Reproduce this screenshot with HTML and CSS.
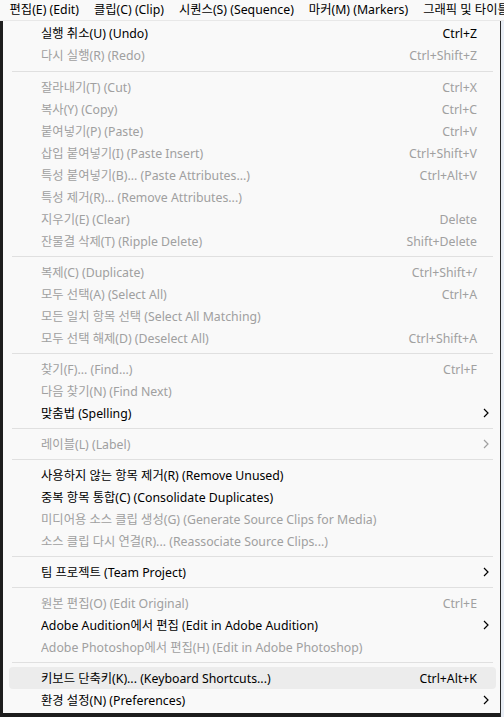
FILE: index.html
```html
<!DOCTYPE html>
<html lang="ko">
<head>
<meta charset="utf-8">
<link rel="stylesheet" href="styles.css">
</head>
<body>
<div class="menubar">
  <span class="mb-item">편집(E) (Edit)</span>
  <span class="mb-item">클립(C) (Clip)</span>
  <span class="mb-item">시퀀스(S) (Sequence)</span>
  <span class="mb-item">마커(M) (Markers)</span>
  <span class="mb-item">그래픽 및 타이틀(G)</span>
</div>
<div class="stage">
  <div class="edge-left"></div>
  <div class="menu">
    <div class="row"><span class="label">실행 취소(U) (Undo)</span><span class="key">Ctrl+Z</span><span class="arrow"></span></div>
    <div class="row off"><span class="label">다시 실행(R) (Redo)</span><span class="key">Ctrl+Shift+Z</span><span class="arrow"></span></div>
    <div class="sep first"></div>
    <div class="row off"><span class="label">잘라내기(T) (Cut)</span><span class="key">Ctrl+X</span><span class="arrow"></span></div>
    <div class="row off"><span class="label">복사(Y) (Copy)</span><span class="key">Ctrl+C</span><span class="arrow"></span></div>
    <div class="row off"><span class="label">붙여넣기(P) (Paste)</span><span class="key">Ctrl+V</span><span class="arrow"></span></div>
    <div class="row off"><span class="label">삽입 붙여넣기(I) (Paste Insert)</span><span class="key">Ctrl+Shift+V</span><span class="arrow"></span></div>
    <div class="row off"><span class="label">특성 붙여넣기(B)... (Paste Attributes...)</span><span class="key">Ctrl+Alt+V</span><span class="arrow"></span></div>
    <div class="row off"><span class="label">특성 제거(R)... (Remove Attributes...)</span><span class="key"></span><span class="arrow"></span></div>
    <div class="row off"><span class="label">지우기(E) (Clear)</span><span class="key">Delete</span><span class="arrow"></span></div>
    <div class="row off"><span class="label">잔물결 삭제(T) (Ripple Delete)</span><span class="key">Shift+Delete</span><span class="arrow"></span></div>
    <div class="sep"></div>
    <div class="row off"><span class="label">복제(C) (Duplicate)</span><span class="key">Ctrl+Shift+/</span><span class="arrow"></span></div>
    <div class="row off"><span class="label">모두 선택(A) (Select All)</span><span class="key">Ctrl+A</span><span class="arrow"></span></div>
    <div class="row off"><span class="label">모든 일치 항목 선택 (Select All Matching)</span><span class="key"></span><span class="arrow"></span></div>
    <div class="row off"><span class="label">모두 선택 해제(D) (Deselect All)</span><span class="key">Ctrl+Shift+A</span><span class="arrow"></span></div>
    <div class="sep"></div>
    <div class="row off"><span class="label">찾기(F)... (Find...)</span><span class="key">Ctrl+F</span><span class="arrow"></span></div>
    <div class="row off"><span class="label">다음 찾기(N) (Find Next)</span><span class="key"></span><span class="arrow"></span></div>
    <div class="row"><span class="label">맞춤법 (Spelling)</span><span class="key"></span><span class="arrow"><svg viewBox="0 0 6 10" width="6" height="10"><path d="M1 1 L5 5 L1 9" fill="none" stroke="currentColor" stroke-width="1.2"/></svg></span></div>
    <div class="sep"></div>
    <div class="row off"><span class="label">레이블(L) (Label)</span><span class="key"></span><span class="arrow"><svg viewBox="0 0 6 10" width="6" height="10"><path d="M1 1 L5 5 L1 9" fill="none" stroke="currentColor" stroke-width="1.2"/></svg></span></div>
    <div class="sep"></div>
    <div class="row"><span class="label">사용하지 않는 항목 제거(R) (Remove Unused)</span><span class="key"></span><span class="arrow"></span></div>
    <div class="row"><span class="label">중복 항목 통합(C) (Consolidate Duplicates)</span><span class="key"></span><span class="arrow"></span></div>
    <div class="row off"><span class="label">미디어용 소스 클립 생성(G) (Generate Source Clips for Media)</span><span class="key"></span><span class="arrow"></span></div>
    <div class="row off"><span class="label">소스 클립 다시 연결(R)... (Reassociate Source Clips...)</span><span class="key"></span><span class="arrow"></span></div>
    <div class="sep"></div>
    <div class="row"><span class="label">팀 프로젝트 (Team Project)</span><span class="key"></span><span class="arrow"><svg viewBox="0 0 6 10" width="6" height="10"><path d="M1 1 L5 5 L1 9" fill="none" stroke="currentColor" stroke-width="1.2"/></svg></span></div>
    <div class="sep"></div>
    <div class="row off"><span class="label">원본 편집(O) (Edit Original)</span><span class="key">Ctrl+E</span><span class="arrow"></span></div>
    <div class="row"><span class="label">Adobe Audition에서 편집 (Edit in Adobe Audition)</span><span class="key"></span><span class="arrow"><svg viewBox="0 0 6 10" width="6" height="10"><path d="M1 1 L5 5 L1 9" fill="none" stroke="currentColor" stroke-width="1.2"/></svg></span></div>
    <div class="row off"><span class="label">Adobe Photoshop에서 편집(H) (Edit in Adobe Photoshop)</span><span class="key"></span><span class="arrow"></span></div>
    <div class="sep"></div>
    <div class="row hover"><span class="label">키보드 단축키(K)... (Keyboard Shortcuts...)</span><span class="key">Ctrl+Alt+K</span><span class="arrow"></span></div>
    <div class="row"><span class="label">환경 설정(N) (Preferences)</span><span class="key"></span><span class="arrow"><svg viewBox="0 0 6 10" width="6" height="10"><path d="M1 1 L5 5 L1 9" fill="none" stroke="currentColor" stroke-width="1.2"/></svg></span></div>
  </div>
  <div class="edge-right"></div>
</div>
</body>
</html>
```

FILE: styles.css
```css
html, body {
  margin: 0;
  padding: 0;
}
body {
  width: 504px;
  height: 717px;
  overflow: hidden;
  background: #1c1c1c;
  font-family: "Noto Sans", "Noto Sans CJK KR", sans-serif;
  font-size: 12.3px;
  color: #000;
}
.menubar {
  height: 20px;
  background: #f9f9f9;
  border-bottom: 1px solid #e8e8e8;
  display: flex;
  align-items: center;
  padding-left: 2px;
  white-space: nowrap;
  overflow: hidden;
}
.mb-item {
  padding: 0 7.5px;
  line-height: 20px;
}
.stage {
  display: flex;
  height: 696px;
}
.edge-left {
  width: 3px;
  background: #1e1e1e;
}
.edge-right {
  width: 1px;
  background: #2a2a2a;
  border-right: 3px solid #e9eef5;
}
.menu {
  width: 497px;
  background: #f9f9f9;
  padding-top: 1px;
  box-sizing: border-box;
  height: 692px;
}
.row {
  display: flex;
  align-items: center;
  height: 22px;
  margin: 0 4px 0 6px;
  padding-left: 32px;
  border-radius: 4px;
  white-space: nowrap;
}
.row.off {
  color: #a0a0a0;
}
.row.hover {
  background: #ececec;
}
.label {
  flex: 1;
  overflow: hidden;
}
.key {
  text-align: right;
}
.arrow {
  width: 19px;
  display: flex;
  align-items: center;
  padding-left: 6px;
  box-sizing: border-box;
}
.arrow svg {
  display: block;
}
.sep {
  height: 1px;
  background: #e0e0e0;
  margin: 4px 7px 4px 9px;
}
.sep.first {
  margin-top: 5px;
  margin-bottom: 4px;
}
```
